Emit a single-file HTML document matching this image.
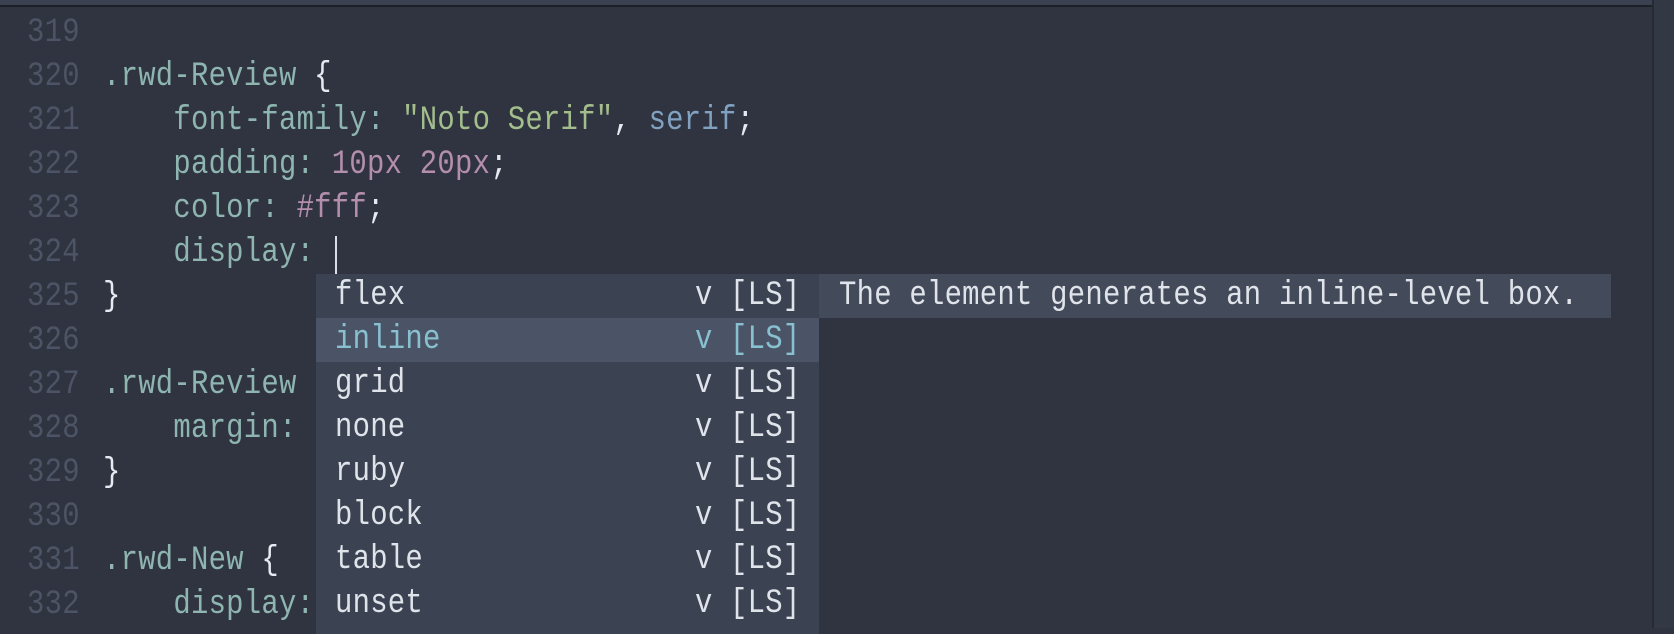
<!DOCTYPE html>
<html><head><style>
html,body{margin:0;padding:0}
body{width:1674px;height:628px;background:#2f3440;overflow:hidden;position:relative;font-family:"Liberation Mono","DejaVu Sans Mono",monospace;font-size:34px;letter-spacing:0.3px}
.top{position:absolute;left:0;top:0;width:1674px;height:5px;background:#3b4150;border-bottom:2px solid #1c2027}
.rs{position:absolute;left:1652px;top:0;width:22px;height:628px;background:#333845;border-left:2px solid #262a33}
.l{position:absolute;left:0;height:44px;line-height:44px;white-space:pre;color:#8fb5b0}
.n,.c,.w,.v,.t,.doc span{transform:scaleX(0.85);transform-origin:0 50%;display:inline-block}
.n{position:absolute;left:27px;color:#4c5465}
.c{position:absolute;left:103px}
.s{color:#a3be8c}.m{color:#b48ead}.b{color:#e5e9f0}.k{color:#81a1c1}
.cur{position:absolute;left:335px;top:236px;width:2px;height:38px;background:#d8dee9}
.pop{position:absolute;left:316px;top:274px;width:503px;height:360px;background:#3b4252}
.r{position:absolute;left:0;width:503px;height:44px;line-height:44px;color:#dfe3ea;white-space:pre}
.r.sel{background:#4b5466;color:#88c0d0}
.r .w{position:absolute;left:19px}
.r .v{position:absolute;left:379px}
.r .t{position:absolute;left:414px}
.doc{position:absolute;left:819px;top:274px;width:792px;height:44px;line-height:44px;background:#434b5b;color:#e0e4ea;white-space:pre}
.doc span{position:absolute;left:20px}
</style></head><body>
<div class="top"></div>
<div class="rs"></div>
<div class="l" style="top:11px"><span class="n">319</span></div>
<div class="l" style="top:55px"><span class="n">320</span><span class="c">.rwd-Review <span class="b">{</span></span></div>
<div class="l" style="top:99px"><span class="n">321</span><span class="c">    font-family: <span class="s">"Noto Serif"</span><span class="b">,</span> <span class="k">serif</span><span class="b">;</span></span></div>
<div class="l" style="top:143px"><span class="n">322</span><span class="c">    padding: <span class="m">10px 20px</span><span class="b">;</span></span></div>
<div class="l" style="top:187px"><span class="n">323</span><span class="c">    color: <span class="m">#fff</span><span class="b">;</span></span></div>
<div class="l" style="top:231px"><span class="n">324</span><span class="c">    display: </span></div>
<div class="l" style="top:275px"><span class="n">325</span><span class="c"><span class="b">}</span></span></div>
<div class="l" style="top:319px"><span class="n">326</span></div>
<div class="l" style="top:363px"><span class="n">327</span><span class="c">.rwd-Review</span></div>
<div class="l" style="top:407px"><span class="n">328</span><span class="c">    margin:</span></div>
<div class="l" style="top:451px"><span class="n">329</span><span class="c"><span class="b">}</span></span></div>
<div class="l" style="top:495px"><span class="n">330</span></div>
<div class="l" style="top:539px"><span class="n">331</span><span class="c">.rwd-New <span class="b">{</span></span></div>
<div class="l" style="top:583px"><span class="n">332</span><span class="c">    display:</span></div>
<div class="cur"></div>
<div class="pop">
<div class="r" style="top:0"><span class="w">flex</span><span class="v">v</span><span class="t">[LS]</span></div>
<div class="r sel" style="top:44px"><span class="w">inline</span><span class="v">v</span><span class="t">[LS]</span></div>
<div class="r" style="top:88px"><span class="w">grid</span><span class="v">v</span><span class="t">[LS]</span></div>
<div class="r" style="top:132px"><span class="w">none</span><span class="v">v</span><span class="t">[LS]</span></div>
<div class="r" style="top:176px"><span class="w">ruby</span><span class="v">v</span><span class="t">[LS]</span></div>
<div class="r" style="top:220px"><span class="w">block</span><span class="v">v</span><span class="t">[LS]</span></div>
<div class="r" style="top:264px"><span class="w">table</span><span class="v">v</span><span class="t">[LS]</span></div>
<div class="r" style="top:308px"><span class="w">unset</span><span class="v">v</span><span class="t">[LS]</span></div>
</div>
<div class="doc"><span>The element generates an inline-level box.</span></div>
</body></html>
